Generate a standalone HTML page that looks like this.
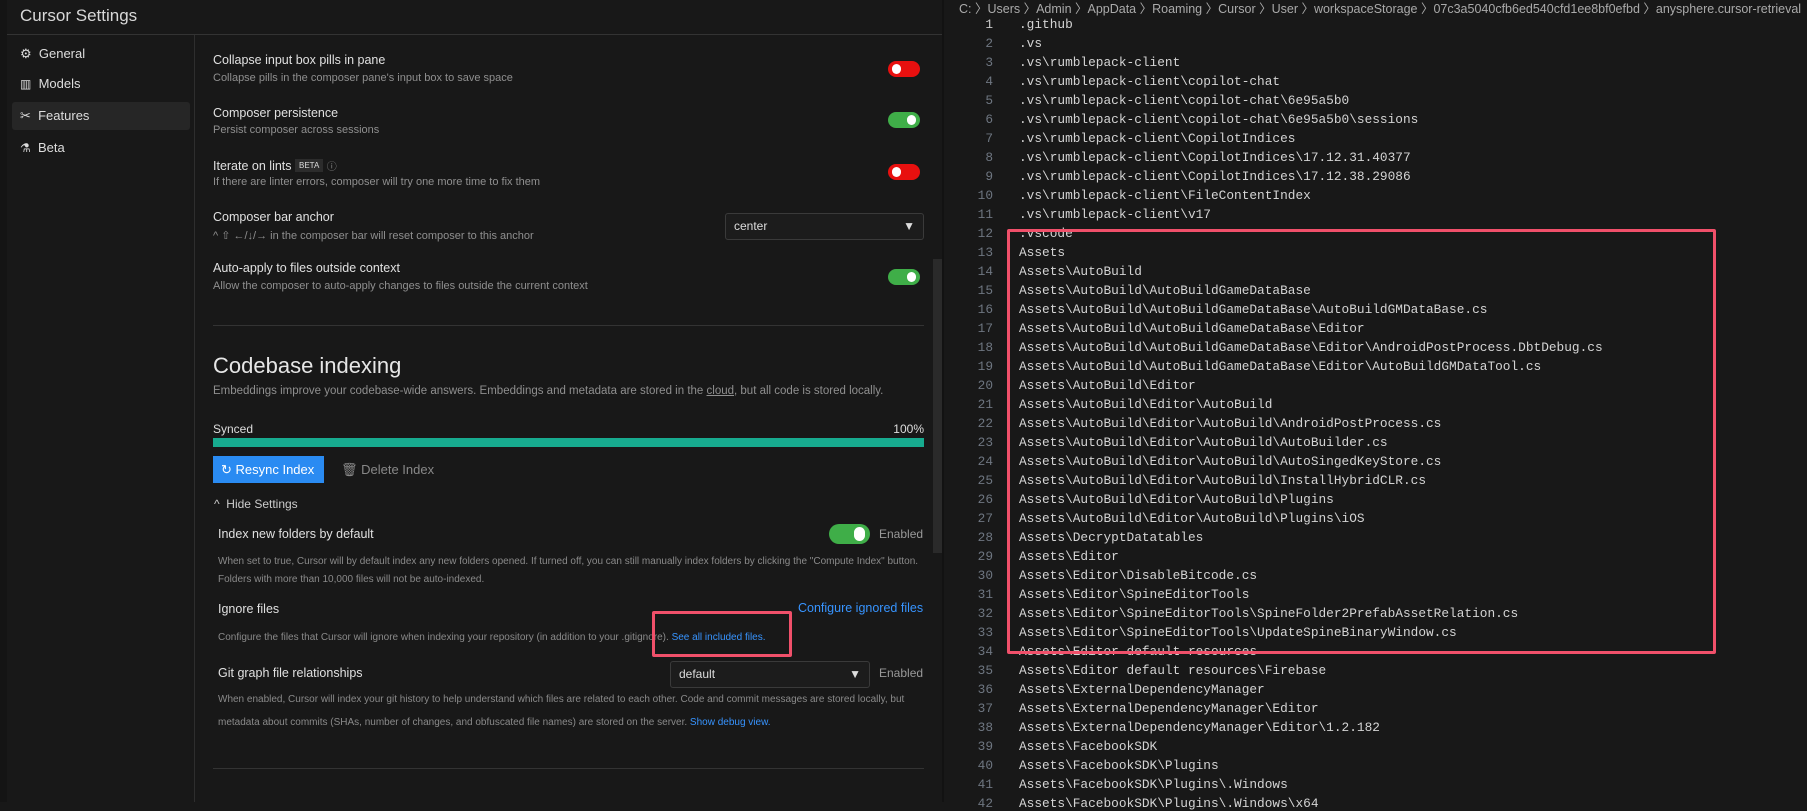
<!DOCTYPE html>
<html><head><meta charset="utf-8"><style>
*{margin:0;padding:0;box-sizing:border-box}
body{width:1807px;height:802px;background:#181818;overflow:hidden;position:relative;font-family:"Liberation Sans",sans-serif;color:#cccccc}
.a{position:absolute;white-space:nowrap}
.t{font-size:12.5px;color:#e0e0e0}
.d{font-size:11px;color:#8f8f8f}
.s{font-size:10px;color:#8a8a8a}
.tg{position:absolute;width:32px;height:16px;border-radius:8px}
.tg::after{content:"";position:absolute;top:3px;width:9px;height:10px;border-radius:5px;background:#fff}
.off{background:#e8100f}.off::after{left:4px}
.on{background:#3fae48}.on::after{right:4px}
.sel{position:absolute;border:1px solid #3a3a3a;background:#1c1c1c;border-radius:3px;font-size:12px;color:#ddd;padding-left:8px}
.code{font-family:"Liberation Mono",monospace;font-size:12.8px;color:#d4d4d4}
.ln{position:absolute;left:955px;width:38px;text-align:right;font-family:"Liberation Mono",monospace;font-size:12.8px;color:#6e7681}
</style></head><body>
<!-- left panel -->
<div class="a" style="left:0;top:0;width:7px;height:802px;background:#141414"></div>
<div class="a" style="left:7px;top:34px;width:935px;height:1px;background:#333"></div>
<div class="a" style="left:194px;top:35px;width:1px;height:767px;background:#2e2e2e"></div>
<div class="a" style="left:20px;top:6px;font-size:17px;color:#d8d8d8">Cursor Settings</div>

<div class="a" style="left:12px;top:102px;width:178px;height:28px;background:#262626;border-radius:3px"></div>
<div class="a" style="left:20px;top:46px;font-size:13px;color:#ddd">⚙&nbsp; General</div>
<div class="a" style="left:20px;top:76px;font-size:13px;color:#ddd"><span style="font-size:12px">▥</span>&nbsp; Models</div>
<div class="a" style="left:20px;top:108px;font-size:13px;color:#ddd">✂&nbsp; Features</div>
<div class="a" style="left:20px;top:140px;font-size:13px;color:#ddd"><span style="font-size:12px">⚗</span>&nbsp; Beta</div>

<div class="a t" style="left:213px;top:53px">Collapse input box pills in pane</div>
<div class="a d" style="left:213px;top:72px">Collapse pills in the composer pane's input box to save space</div>
<div class="tg off" style="left:888px;top:61px"></div>

<div class="a t" style="left:213px;top:106px">Composer persistence</div>
<div class="a d" style="left:213px;top:124px">Persist composer across sessions</div>
<div class="tg on" style="left:888px;top:112px"></div>

<div class="a t" style="left:213px;top:158px">Iterate on lints <span style="font-size:8px;background:#2c2c2c;padding:2px 4px;color:#ddd;vertical-align:2px">BETA</span> <span style="font-size:10px;color:#888">ⓘ</span></div>
<div class="a d" style="left:213px;top:176px">If there are linter errors, composer will try one more time to fix them</div>
<div class="tg off" style="left:888px;top:164px"></div>

<div class="a t" style="left:213px;top:210px">Composer bar anchor</div>
<div class="a d" style="left:213px;top:229px">^ ⇧ ←/↓/→ in the composer bar will reset composer to this anchor</div>
<div class="sel" style="left:725px;top:213px;width:199px;height:27px;line-height:25px">center<span style="position:absolute;right:8px;font-size:12px">▼</span></div>

<div class="a t" style="left:213px;top:261px">Auto-apply to files outside context</div>
<div class="a d" style="left:213px;top:280px">Allow the composer to auto-apply changes to files outside the current context</div>
<div class="tg on" style="left:888px;top:269px"></div>

<div class="a" style="left:933px;top:259px;width:9px;height:294px;background:#2a2a2a"></div>
<div class="a" style="left:213px;top:325px;width:711px;height:1px;background:#333"></div>

<div class="a" style="left:213px;top:353px;font-size:22px;color:#e6e6e6">Codebase indexing</div>
<div class="a d" style="left:213px;top:385px;font-size:11.5px">Embeddings improve your codebase-wide answers. Embeddings and metadata are stored in the <u>cloud</u>, but all code is stored locally.</div>
<div class="a" style="left:213px;top:422px;font-size:12px;color:#ddd">Synced</div>
<div class="a" style="left:880px;top:422px;width:44px;text-align:right;font-size:12px;color:#ddd">100%</div>
<div class="a" style="left:213px;top:438px;width:711px;height:9px;background:#17ab8f"></div>
<div class="a" style="left:213px;top:456px;width:111px;height:27px;background:#2a8bf2;color:#fff;font-size:13px;line-height:27px;padding-left:8px">↻ Resync Index</div>
<div class="a" style="left:341px;top:462px;font-size:13px;color:#888">🗑 Delete Index</div>
<div class="a" style="left:214px;top:497px;font-size:12px;color:#ccc">^&nbsp; Hide Settings</div>

<div class="a t" style="left:218px;top:527px">Index new folders by default</div>
<div class="a" style="left:829px;top:524px;width:41px;height:20px;border-radius:10px;background:#3fae48"><div style="position:absolute;right:5px;top:3px;width:11px;height:14px;border-radius:6px;background:#fff"></div></div>
<div class="a" style="left:879px;top:527px;font-size:12px;color:#999">Enabled</div>
<div class="a s" style="left:218px;top:556px">When set to true, Cursor will by default index any new folders opened. If turned off, you can still manually index folders by clicking the "Compute Index" button.</div>
<div class="a s" style="left:218px;top:574px">Folders with more than 10,000 files will not be auto-indexed.</div>

<div class="a t" style="left:218px;top:602px">Ignore files</div>
<div class="a" style="left:798px;top:601px;font-size:12.5px;color:#3794ff">Configure ignored files</div>
<div class="a s" style="left:218px;top:632px">Configure the files that Cursor will ignore when indexing your repository (in addition to your .gitignore). <span style="color:#3794ff">See all included files.</span></div>
<div class="a" style="left:652px;top:611px;width:140px;height:46px;border:3px solid #f0506a;border-radius:2px"></div>

<div class="a t" style="left:218px;top:666px">Git graph file relationships</div>
<div class="sel" style="left:670px;top:661px;width:200px;height:27px;line-height:25px">default<span style="position:absolute;right:8px">▼</span></div>
<div class="a" style="left:879px;top:666px;font-size:12px;color:#999">Enabled</div>
<div class="a s" style="left:218px;top:694px">When enabled, Cursor will index your git history to help understand which files are related to each other. Code and commit messages are stored locally, but</div>
<div class="a s" style="left:218px;top:717px">metadata about commits (SHAs, number of changes, and obfuscated file names) are stored on the server. <span style="color:#3794ff">Show debug view.</span></div>
<div class="a" style="left:213px;top:768px;width:711px;height:1px;background:#333"></div>

<!-- right panel -->
<div class="a" style="left:942px;top:0;width:2px;height:802px;background:#121212"></div>
<div class="a" style="left:959px;top:-2px;font-size:12.5px;color:#aaa">C: 〉Users 〉Admin 〉AppData 〉Roaming 〉Cursor 〉User 〉workspaceStorage 〉07c3a5040cfb6ed540cfd1ee8bf0efbd 〉anysphere.cursor-retrieval</div>
<div id="code"></div>
<div class="a" style="left:1007px;top:229px;width:709px;height:425px;border:3px solid #f0506a;border-radius:2px"></div>
<script>
var L=[".github",".vs",".vs\\rumblepack-client",".vs\\rumblepack-client\\copilot-chat",".vs\\rumblepack-client\\copilot-chat\\6e95a5b0",".vs\\rumblepack-client\\copilot-chat\\6e95a5b0\\sessions",".vs\\rumblepack-client\\CopilotIndices",".vs\\rumblepack-client\\CopilotIndices\\17.12.31.40377",".vs\\rumblepack-client\\CopilotIndices\\17.12.38.29086",".vs\\rumblepack-client\\FileContentIndex",".vs\\rumblepack-client\\v17",".vscode","Assets","Assets\\AutoBuild","Assets\\AutoBuild\\AutoBuildGameDataBase","Assets\\AutoBuild\\AutoBuildGameDataBase\\AutoBuildGMDataBase.cs","Assets\\AutoBuild\\AutoBuildGameDataBase\\Editor","Assets\\AutoBuild\\AutoBuildGameDataBase\\Editor\\AndroidPostProcess.DbtDebug.cs","Assets\\AutoBuild\\AutoBuildGameDataBase\\Editor\\AutoBuildGMDataTool.cs","Assets\\AutoBuild\\Editor","Assets\\AutoBuild\\Editor\\AutoBuild","Assets\\AutoBuild\\Editor\\AutoBuild\\AndroidPostProcess.cs","Assets\\AutoBuild\\Editor\\AutoBuild\\AutoBuilder.cs","Assets\\AutoBuild\\Editor\\AutoBuild\\AutoSingedKeyStore.cs","Assets\\AutoBuild\\Editor\\AutoBuild\\InstallHybridCLR.cs","Assets\\AutoBuild\\Editor\\AutoBuild\\Plugins","Assets\\AutoBuild\\Editor\\AutoBuild\\Plugins\\iOS","Assets\\DecryptDatatables","Assets\\Editor","Assets\\Editor\\DisableBitcode.cs","Assets\\Editor\\SpineEditorTools","Assets\\Editor\\SpineEditorTools\\SpineFolder2PrefabAssetRelation.cs","Assets\\Editor\\SpineEditorTools\\UpdateSpineBinaryWindow.cs","Assets\\Editor default resources","Assets\\Editor default resources\\Firebase","Assets\\ExternalDependencyManager","Assets\\ExternalDependencyManager\\Editor","Assets\\ExternalDependencyManager\\Editor\\1.2.182","Assets\\FacebookSDK","Assets\\FacebookSDK\\Plugins","Assets\\FacebookSDK\\Plugins\\.Windows","Assets\\FacebookSDK\\Plugins\\.Windows\\x64"];
var h="";
for(var i=0;i<L.length;i++){var y=17+i*19;
h+='<div class="ln" style="top:'+y+'px;'+(i==0?'color:#ccc':'')+'">'+(i+1)+'</div>';
h+='<div class="a code" style="left:1019px;top:'+y+'px">'+L[i].replace(/&/g,"&amp;")+'</div>';}
document.getElementById("code").innerHTML=h;
</script>
</body></html>
